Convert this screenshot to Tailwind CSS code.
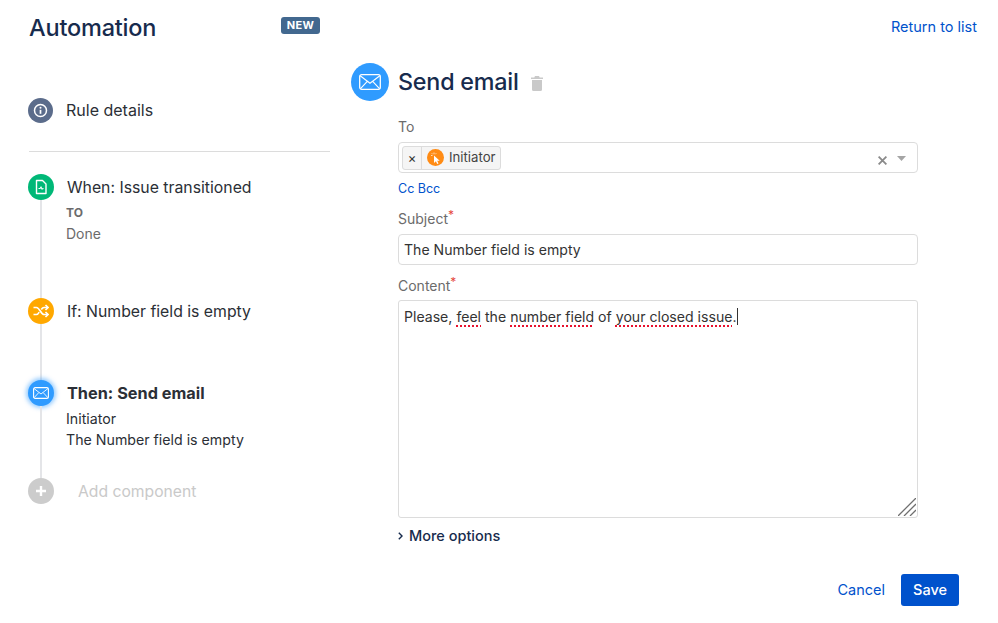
<!DOCTYPE html>
<html lang="en">

<head>
  <meta charset="UTF-8">
  <meta name="viewport" content="width=device-width, initial-scale=1.0">
  <title>Automation</title>
  <script src="https://cdn.jsdelivr.net/npm/@tailwindcss/browser@4"></script>
</head>

<body class="bg-white h-[623px] overflow-hidden font-['Inter','Liberation_Sans',sans-serif] text-[#2b2f36]">
  <div class="flex h-[623px]">

    <!-- Sidebar -->
    <aside class="w-[330px] shrink-0 pl-[28px]">
      <div class="flex items-center justify-between h-[54px] pr-[10px]">
        <h1 class="ml-px mt-[1px] text-[23.500px] font-medium text-[#172b4d] tracking-[-0.2px]">Automation</h1>
        <span class="mb-[3px] h-[17px] w-[39px] rounded-[3px] bg-[#42688f] text-white text-[11px] font-bold leading-[17px] text-center tracking-[0.3px]">NEW</span>
      </div>

      <div class="flex items-center gap-[13px] mt-[43px] h-[26px]">
        <span class="w-[25px] h-[25px] rounded-full bg-[#5b6c8b] flex items-center justify-center">
          <svg width="15" height="15" viewBox="0 0 15 15" fill="none">
            <circle cx="7.500" cy="7.500" r="6" stroke="white" stroke-width="1.500" />
            <path d="M7.500 6.800v4" stroke="white" stroke-width="1.700" />
            <circle cx="7.500" cy="4.700" r="1" fill="white" />
          </svg>
        </span>
        <span class="text-[16px]">Rule details</span>
      </div>

      <hr class="border-0 border-t border-[#dcdcdc] mt-[28px] ml-px">

      <!-- Steps -->
      <div class="mt-[22px]">
        <div class="flex h-[124px]">
          <div class="w-[26px] flex flex-col items-center">
            <span class="w-[26px] h-[26px] shrink-0 rounded-full bg-[#00b877] flex items-center justify-center">
              <svg width="14" height="16" viewBox="0 0 14 16" fill="none" stroke="white" stroke-width="1.400">
                <path d="M2.500 1.500h6l3.500 3.500v9.500h-9.500z" stroke-linejoin="round" />
                <path d="M4.500 9.500l1.500 0 1-1.500 1 2 1.500-.5" stroke-width="1.100" />
              </svg>
            </span>
            <span class="w-[2px] flex-1 bg-[#e4e5e8]"></span>
          </div>
          <div class="ml-[13px]">
            <div class="text-[15.800px] leading-[28px] h-[26px]">When: Issue transitioned</div>
            <div class="text-[12px] font-bold text-[#6b6b6b] leading-[20px] mt-[3px] -ml-px">TO</div>
            <div class="text-[14px] text-[#6b6b6b] leading-[21px] -ml-px">Done</div>
          </div>
        </div>

        <div class="flex h-[82px]">
          <div class="w-[26px] flex flex-col items-center">
            <span class="w-[26px] h-[26px] shrink-0 rounded-full bg-[#ffa800] flex items-center justify-center">
              <svg width="16" height="14" viewBox="0 0 16 14" fill="none" stroke="white" stroke-width="1.600">
                <path d="M0.500 3.500h3c3 0 4.500 7 7.500 7h3" />
                <path d="M0.500 10.500h3c1.200 0 2-1 2.700-2.300M8.300 5.500c.7-1.100 1.500-2 2.700-2h3" />
                <path d="M12.500 1l2.500 2.500-2.500 2.500M12.500 8l2.500 2.500-2.500 2.500" />
              </svg>
            </span>
            <span class="w-[2px] flex-1 bg-[#e4e5e8]"></span>
          </div>
          <div class="ml-[13px] text-[15.800px] leading-[28px]">If: Number field is empty</div>
        </div>

        <div class="flex h-[98px]">
          <div class="w-[26px] flex flex-col items-center">
            <span class="w-[26px] h-[26px] shrink-0 rounded-full bg-[#2f9bff] shadow-[0_0_4px_2px_rgba(47,155,255,0.5)] flex items-center justify-center">
              <svg width="16" height="12" viewBox="0 0 16 12" fill="none" stroke="white" stroke-width="1.100">
                <rect x="0.600" y="0.600" width="14.800" height="10.800" rx="1.500" />
                <path d="M1 1.500l7 5.500 7-5.500M1 10.800l4.800-5.200M15 10.800l-4.800-5.200" stroke-width="0.900" />
              </svg>
            </span>
            <span class="w-[2px] flex-1 bg-[#e4e5e8]"></span>
          </div>
          <div class="ml-[13px]">
            <div class="text-[16.300px] font-bold leading-[26px]">Then: Send email</div>
            <div class="text-[14.200px] leading-[21px] mt-[2px] -ml-px">Initiator</div>
            <div class="text-[14.200px] leading-[21px] -ml-px">The Number field is empty</div>
          </div>
        </div>

        <div class="flex h-[26px] items-center">
          <span class="w-[26px] h-[26px] rounded-full bg-[#cccccc] flex items-center justify-center">
            <svg width="10" height="10" viewBox="0 0 10 10" stroke="white" stroke-width="2.400">
              <path d="M5 0v10M0 5h10" />
            </svg>
          </span>
          <span class="ml-[24px] mt-[2px] text-[15.700px] text-[#c9c9c9]">Add component</span>
        </div>
      </div>
    </aside>

    <!-- Main -->
    <main class="w-[647px] pl-[21px]">
      <div class="h-[54px] flex items-center justify-end">
        <a href="#" class="text-[14.500px] text-[#0052cc]">Return to list</a>
      </div>

      <div class="flex items-center mt-[9px] h-[38px]">
        <span class="w-[38px] h-[38px] rounded-full bg-[#2f9bff] flex items-center justify-center">
          <svg width="22" height="16" viewBox="0 0 22 16" fill="none" stroke="white" stroke-width="1.300">
            <rect x="0.700" y="0.700" width="20.600" height="14.600" rx="2" />
            <path d="M1.200 1.800l9.800 7.400 9.800-7.400M1.500 14.600l6.800-7.200M20.500 14.600l-6.800-7.200" stroke-width="1.100" />
          </svg>
        </span>
        <h2 class="ml-[9px] text-[23.300px] font-medium text-[#172b4d] tracking-[-0.2px]">Send email</h2>
        <svg class="ml-[12px] mt-[3px]" width="12" height="15" viewBox="0 0 12 15" fill="#c9c9c9">
          <path d="M4 0h4l.7 1.500H12V3H0V1.500h3.300zM1 4h10v9.500A1.500 1.500 0 0 1 9.500 15h-7A1.500 1.500 0 0 1 1 13.500z" />
        </svg>
      </div>

      <form class="ml-[47px] w-[520px]">
        <label class="block mt-[16px] text-[14px] leading-[20px] text-[#6b6b6b]">To</label>
        <div class="mt-[5px] h-[31px] rounded-[4px] border border-[#dcdcdc] flex items-center pl-[3px] pr-[11px]">
          <span class="h-[24px] flex items-center rounded-[3px] border border-[#dcdcdc] bg-[#f5f5f5]">
            <span class="w-[19px] text-center text-[13px] leading-[22px] border-r border-[#dcdcdc] text-[#333333]">×</span>
            <span class="ml-[5px] w-[17px] h-[17px] rounded-full bg-[#ff8b14] flex items-center justify-center">
              <svg width="11" height="12" viewBox="0 0 11 12" fill="white">
                <path d="M4 3.500v7.500l1.900-1.700 1.300 2.700 1.300-.6-1.300-2.700h2.500z" />
                <path d="M4 .5v1.500M1 3.500h1.500M1.800 1.300l1 1M6.200 1.300l-1 1" stroke="white" stroke-width="0.700" />
              </svg>
            </span>
            <span class="ml-[5px] pr-[4px] text-[13.200px] text-[#444444]">Initiator</span>
          </span>
          <svg class="ml-auto mt-[5px]" width="9" height="9" viewBox="0 0 9 9" stroke="#8a8a8a" stroke-width="1.800">
            <path d="M.6 .6l7.800 7.800M8.400 .6L.6 8.400" />
          </svg>
          <svg class="ml-[10px] mt-[2px]" width="9" height="5" viewBox="0 0 9 5" fill="#a5a5a5">
            <path d="M0 0h9L4.500 5z" />
          </svg>
        </div>
        <a href="#" class="block mt-[8px] text-[12.500px] leading-[16px] text-[#0052cc]">Cc Bcc</a>

        <label class="block mt-[12px] text-[14px] leading-[20px] text-[#6b6b6b]">Subject<sup class="text-[#e5483d] text-[12px] leading-none top-[-5px]">*</sup></label>
        <input class="block mt-[5px] w-full h-[31px] px-[5px] rounded-[4px] border border-[#dcdcdc] text-[14.100px] text-[#333333] outline-none" value="The Number field is empty">

        <label class="block mt-[11px] text-[14px] leading-[20px] text-[#6b6b6b]">Content<sup class="text-[#e5483d] text-[12px] leading-none top-[-5px]">*</sup></label>
        <div class="relative mt-[4px] h-[218px] rounded-[3px] border border-[#dcdcdc] px-[5px] pt-[5px] text-[14.100px] leading-[21px] text-[#333333]">
          Please, <span class="underline underline-offset-[3px] decoration-dotted decoration-[#e8112d] decoration-2">feel</span> the <span class="underline underline-offset-[3px] decoration-dotted decoration-[#e8112d] decoration-2">number field</span> of <span class="underline underline-offset-[3px] decoration-dotted decoration-[#e8112d] decoration-2">your closed issue</span>.<span class="inline-block w-px h-[17px] bg-[#333333] align-text-bottom"></span>
          <svg class="absolute right-[1px] bottom-[1px]" width="18" height="18" viewBox="0 0 18 18" stroke="#6f6f6f" stroke-width="1.300">
            <path d="M0 18L18 0M6 18L18 6M12 18l6-6" />
          </svg>
        </div>

        <div class="flex items-center mt-[8px] h-[20px] text-[14.500px] font-medium text-[#172b4d]">
          <svg class="mr-[6px]" width="5" height="8" viewBox="0 0 5 8" fill="none" stroke="#172b4d" stroke-width="1.400">
            <path d="M.8 .8L4 4 .8 7.200" />
          </svg>
          More options
        </div>

        <div class="flex items-center justify-end mt-[28px] w-[561px]">
          <a href="#" class="text-[14.500px] text-[#0052cc]">Cancel</a>
          <button type="button" class="ml-[16px] w-[58px] h-[32px] rounded-[3px] bg-[#0052cc] text-white text-[14.500px] font-medium">Save</button>
        </div>
      </form>
    </main>
  </div>
</body>

</html>
